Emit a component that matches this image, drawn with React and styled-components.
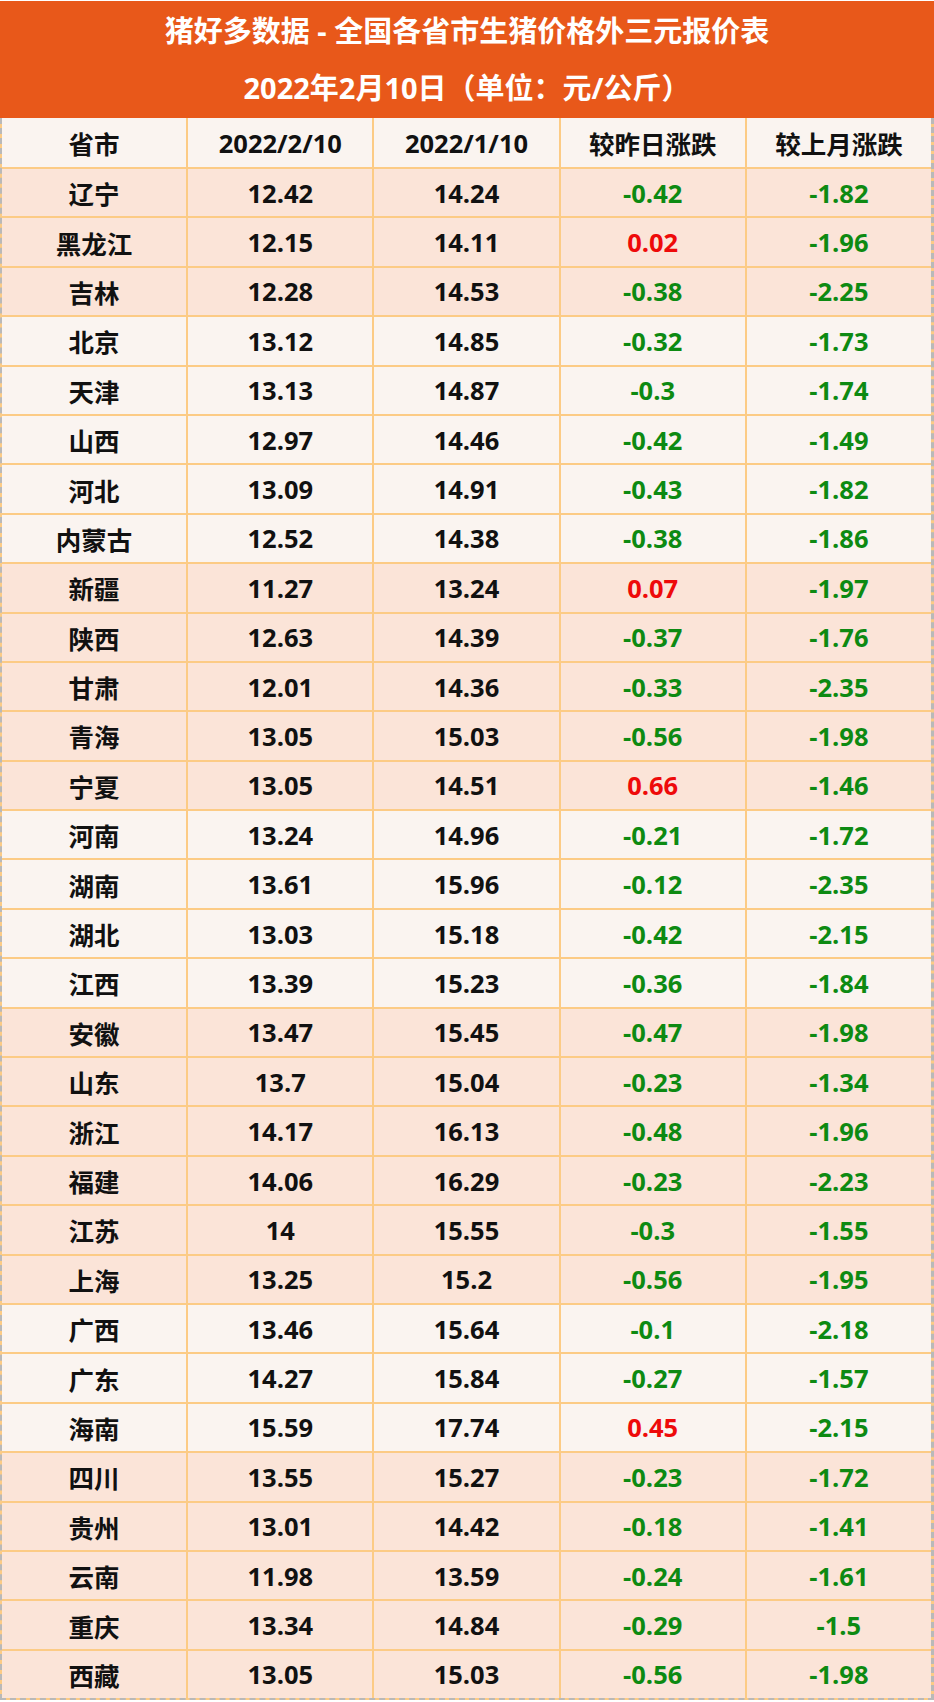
import React from 'react'
import styled, { createGlobalStyle } from 'styled-components'

const GlobalStyle = createGlobalStyle`
  html, body {
    margin: 0;
    padding: 0;
    background: #ffffff;
  }
  body {
    font-family: "Open Sans", "Noto Sans CJK SC", sans-serif;
  }
`

const rows = [
  ['辽宁', '12.42', '14.24', '-0.42', '-1.82', 'peach'],
  ['黑龙江', '12.15', '14.11', '0.02', '-1.96', 'peach'],
  ['吉林', '12.28', '14.53', '-0.38', '-2.25', 'peach'],
  ['北京', '13.12', '14.85', '-0.32', '-1.73', 'light'],
  ['天津', '13.13', '14.87', '-0.3', '-1.74', 'light'],
  ['山西', '12.97', '14.46', '-0.42', '-1.49', 'light'],
  ['河北', '13.09', '14.91', '-0.43', '-1.82', 'light'],
  ['内蒙古', '12.52', '14.38', '-0.38', '-1.86', 'light'],
  ['新疆', '11.27', '13.24', '0.07', '-1.97', 'peach'],
  ['陕西', '12.63', '14.39', '-0.37', '-1.76', 'peach'],
  ['甘肃', '12.01', '14.36', '-0.33', '-2.35', 'peach'],
  ['青海', '13.05', '15.03', '-0.56', '-1.98', 'peach'],
  ['宁夏', '13.05', '14.51', '0.66', '-1.46', 'peach'],
  ['河南', '13.24', '14.96', '-0.21', '-1.72', 'light'],
  ['湖南', '13.61', '15.96', '-0.12', '-2.35', 'light'],
  ['湖北', '13.03', '15.18', '-0.42', '-2.15', 'light'],
  ['江西', '13.39', '15.23', '-0.36', '-1.84', 'light'],
  ['安徽', '13.47', '15.45', '-0.47', '-1.98', 'peach'],
  ['山东', '13.7', '15.04', '-0.23', '-1.34', 'peach'],
  ['浙江', '14.17', '16.13', '-0.48', '-1.96', 'peach'],
  ['福建', '14.06', '16.29', '-0.23', '-2.23', 'peach'],
  ['江苏', '14', '15.55', '-0.3', '-1.55', 'peach'],
  ['上海', '13.25', '15.2', '-0.56', '-1.95', 'peach'],
  ['广西', '13.46', '15.64', '-0.1', '-2.18', 'light'],
  ['广东', '14.27', '15.84', '-0.27', '-1.57', 'light'],
  ['海南', '15.59', '17.74', '0.45', '-2.15', 'light'],
  ['四川', '13.55', '15.27', '-0.23', '-1.72', 'peach'],
  ['贵州', '13.01', '14.42', '-0.18', '-1.41', 'peach'],
  ['云南', '11.98', '13.59', '-0.24', '-1.61', 'peach'],
  ['重庆', '13.34', '14.84', '-0.29', '-1.5', 'peach'],
  ['西藏', '13.05', '15.03', '-0.56', '-1.98', 'peach'],
]

const headers = ['省市', '2022/2/10', '2022/1/10', '较昨日涨跌', '较上月涨跌']

const bg = {
  peach: '#fbe4d8',
  light: '#faf4f0',
}

const UI = {
  Page: styled.div`
    width: 934px;
  `,
  Banner: styled.header`
    height: 117px;
    margin-top: 1px;
    background: #e8581a;
    color: #ffffff;
    display: flex;
    flex-direction: column;
    align-items: center;
    justify-content: center;
    gap: 19px;
    font-weight: 700;
    font-size: 29px;
    line-height: 38px;
  `,
  Line: styled.div`
    white-space: pre;
  `,
  Table: styled.div`
    display: grid;
    grid-template-columns: repeat(5, 1fr);
    grid-auto-rows: 47.4px;
    grid-template-rows: 49px;
    gap: 2px;
    background: #fccb85;
    border-left: 2px dashed #b9b9b9;
    border-right: 3px dashed #b9b9b9;
    border-bottom: 2px dashed #b9b9b9;
  `,
  Cell: styled.div`
    display: flex;
    align-items: center;
    justify-content: center;
    background: ${p => p.$bg};
    color: ${p => p.$color || '#111111'};
    font-size: 25.5px;
    font-weight: 700;
  `,
}

function changeColor(v) {
  return v.startsWith('-') ? '#0d8a12' : '#ee0a0a'
}

export default function App() {
  return (
    <UI.Page>
      <GlobalStyle />
      <UI.Banner>
        <UI.Line>猪好多数据 - 全国各省市生猪价格外三元报价表</UI.Line>
        <UI.Line>2022年2月10日（单位：元/公斤）</UI.Line>
      </UI.Banner>
      <UI.Table>
        {headers.map(h => (
          <UI.Cell key={h} $bg={bg.light}>{h}</UI.Cell>
        ))}
        {rows.map(([name, now, last, day, month, tone]) => (
          <React.Fragment key={name}>
            <UI.Cell $bg={bg[tone]}>{name}</UI.Cell>
            <UI.Cell $bg={bg[tone]}>{now}</UI.Cell>
            <UI.Cell $bg={bg[tone]}>{last}</UI.Cell>
            <UI.Cell $bg={bg[tone]} $color={changeColor(day)}>{day}</UI.Cell>
            <UI.Cell $bg={bg[tone]} $color={changeColor(month)}>{month}</UI.Cell>
          </React.Fragment>
        ))}
      </UI.Table>
    </UI.Page>
  )
}
